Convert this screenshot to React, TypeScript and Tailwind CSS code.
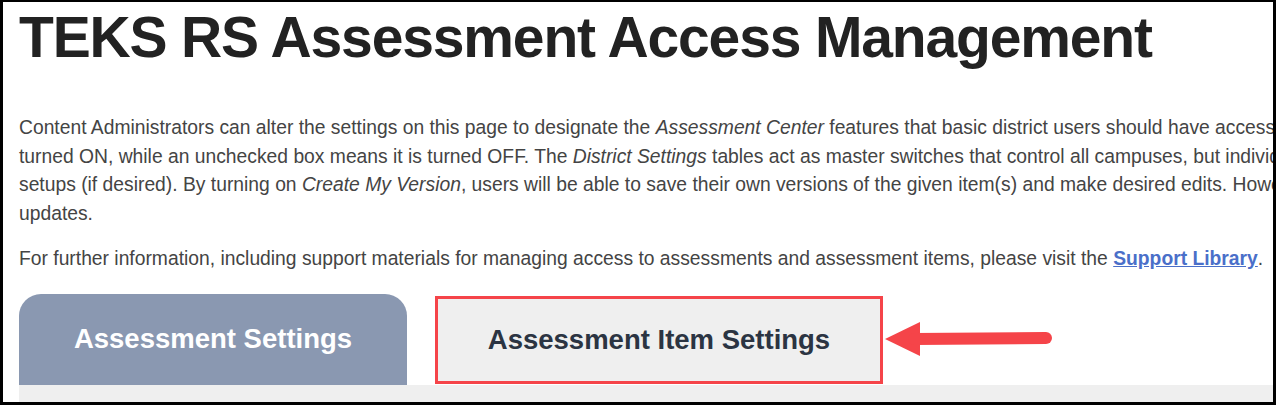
import React from "react";

function Arrow() {
  return (
    <svg width="170" height="40" viewBox="0 0 170 40" className="block">
      <polygon points="1,20 36,3 36,37" fill="#f54449" />
      <line x1="30" y1="20" x2="162" y2="19" stroke="#f54449" strokeWidth="12" strokeLinecap="round" />
    </svg>
  );
}

export default function App() {
  return (
    <div className="w-[1276px] h-[405px] overflow-hidden bg-white border-black border-t-2 border-l-[3px] border-r-[3px] border-b-[3px] font-['Liberation_Sans',Arial,sans-serif]">
      <div className="pl-4 whitespace-nowrap">
        <h1 className="pt-[7px] text-[57px] leading-none font-bold text-[#222222] tracking-[-1.15px]">
          TEKS RS Assessment Access Management
        </h1>
        <div className="mt-[48px] text-[19.3px] leading-[28.5px] text-[#444444]">
          <div>
            Content Administrators can alter the settings on this page to designate the <i>Assessment Center</i> features that basic district users should have access to. A checked box means a feature is
          </div>
          <div>
            turned ON, while an unchecked box means it is turned OFF. The <i>District Settings</i> tables act as master switches that control all campuses, but individual campuses may have their own
          </div>
          <div>
            setups (if desired). By turning on <i>Create My Version</i>, users will be able to save their own versions of the given item(s) and make desired edits. However, they will not receive
          </div>
          <div>updates.</div>
        </div>
        <p className="mt-[17px] text-[19.3px] leading-[28.5px] text-[#444444]">
          For further information, including support materials for managing access to assessments and assessment items, please visit the{" "}
          <a href="#" className="font-bold text-[#4a6fc9] underline">Support Library</a>.
        </p>
        <div className="mt-[20px]">
          <div className="flex items-center">
            <div className="w-[388px] h-[91px] rounded-t-[22px] bg-[#8a98b1] flex items-center justify-center text-white font-bold text-[27.5px]">
              Assessment Settings
            </div>
            <div className="ml-[28px] mt-[2px] w-[448px] h-[88px] border-[3px] border-[#f54449] bg-[#efefef] flex items-center justify-center text-[#2b3442] font-bold text-[27.5px]">
              Assessment Item Settings
            </div>
            <div className="ml-[1px]">
              <Arrow />
            </div>
          </div>
          <div className="h-[20px] bg-[#efefef]" />
        </div>
      </div>
    </div>
  );
}
